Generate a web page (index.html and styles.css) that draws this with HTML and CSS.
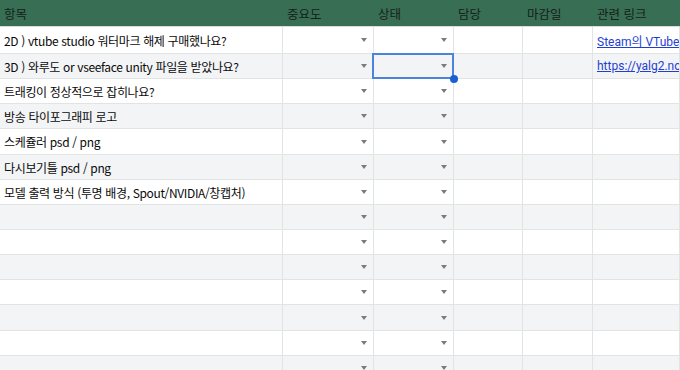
FILE: index.html
```html
<!DOCTYPE html>
<html lang="ko">
<head>
<meta charset="utf-8">
<link rel="stylesheet" href="styles.css">
</head>
<body>
<div class="sheet">
  <div class="row head">
    <div class="c">항목</div><div class="c">중요도</div><div class="c">상태</div><div class="c">담당</div><div class="c">마감일</div><div class="c">관련 링크</div>
  </div>
  <div class="row r27">
    <div class="c t">2D ) vtube studio 워터마크 해제 구매했나요?</div><div class="c dd"><i></i></div><div class="c dd"><i></i></div><div class="c"></div><div class="c"></div><div class="c"><a class="lnk">Steam의 VTube</a></div>
  </div>
  <div class="row alt">
    <div class="c t">3D ) 와루도 or vseeface unity 파일을 받았나요?</div><div class="c dd"><i></i></div><div class="c dd sel"><i></i></div><div class="c"></div><div class="c"></div><div class="c"><a class="lnk">https://yalg2.no</a></div>
  </div>
  <div class="row">
    <div class="c t">트래킹이 정상적으로 잡히나요?</div><div class="c dd"><i></i></div><div class="c dd"><i></i></div><div class="c"></div><div class="c"></div><div class="c"></div>
  </div>
  <div class="row alt">
    <div class="c t">방송 타이포그래피 로고</div><div class="c dd"><i></i></div><div class="c dd"><i></i></div><div class="c"></div><div class="c"></div><div class="c"></div>
  </div>
  <div class="row r26">
    <div class="c t">스케쥴러 psd / png</div><div class="c dd"><i></i></div><div class="c dd"><i></i></div><div class="c"></div><div class="c"></div><div class="c"></div>
  </div>
  <div class="row alt">
    <div class="c t">다시보기틀 psd / png</div><div class="c dd"><i></i></div><div class="c dd"><i></i></div><div class="c"></div><div class="c"></div><div class="c"></div>
  </div>
  <div class="row">
    <div class="c t">모델 출력 방식 (투명 배경, Spout/NVIDIA/창캡처)</div><div class="c dd"><i></i></div><div class="c dd"><i></i></div><div class="c"></div><div class="c"></div><div class="c"></div>
  </div>
  <div class="row alt">
    <div class="c t"></div><div class="c dd"><i></i></div><div class="c dd"><i></i></div><div class="c"></div><div class="c"></div><div class="c"></div>
  </div>
  <div class="row">
    <div class="c t"></div><div class="c dd"><i></i></div><div class="c dd"><i></i></div><div class="c"></div><div class="c"></div><div class="c"></div>
  </div>
  <div class="row alt">
    <div class="c t"></div><div class="c dd"><i></i></div><div class="c dd"><i></i></div><div class="c"></div><div class="c"></div><div class="c"></div>
  </div>
  <div class="row">
    <div class="c t"></div><div class="c dd"><i></i></div><div class="c dd"><i></i></div><div class="c"></div><div class="c"></div><div class="c"></div>
  </div>
  <div class="row alt r26">
    <div class="c t"></div><div class="c dd"><i></i></div><div class="c dd"><i></i></div><div class="c"></div><div class="c"></div><div class="c"></div>
  </div>
  <div class="row">
    <div class="c t"></div><div class="c dd"><i></i></div><div class="c dd"><i></i></div><div class="c"></div><div class="c"></div><div class="c"></div>
  </div>
  <div class="row alt">
    <div class="c t"></div><div class="c dd"><i></i></div><div class="c dd"><i></i></div><div class="c"></div><div class="c"></div><div class="c"></div>
  </div>
</div>
</body>
</html>
```
FILE: styles.css
```css
* { box-sizing: border-box; }
html, body { margin: 0; padding: 0; }
body {
  width: 680px;
  height: 370px;
  overflow: hidden;
  background: #ffffff;
  font-family: "Noto Sans CJK KR", "Noto Sans", sans-serif;
  font-size: 12px;
  color: #0a0a0a;
}
.sheet { width: 680px; }
.row {
  display: grid;
  grid-template-columns: 283px 91px 80px 69px 70px 87px;
  height: 25px;
  background: #ffffff;
}
.row.alt { background: #f3f4f6; }
.row.r27 { height: 27px; }
.row.r26 { height: 26px; }
.c {
  border-right: 1px solid #e2e3e3;
  border-bottom: 1px solid #e2e3e3;
  display: flex;
  align-items: center;
  padding: 0 4px;
  white-space: nowrap;
  overflow: hidden;
  position: relative;
}
.row.head {
  height: 27px;
  background: #386e53;
  color: #15211b;
  font-size: 12.5px;
}
.row.head .c { border: none; border-bottom: 1px solid #d9dcdb; }
.t { letter-spacing: -0.35px; }
.dd { justify-content: flex-end; padding-right: 6px; }
.dd i {
  width: 0; height: 0;
  border-left: 3.5px solid transparent;
  border-right: 3.5px solid transparent;
  border-top: 4px solid #7b7b7b;
}
.sel { overflow: visible; }
.sel::before {
  content: "";
  position: absolute;
  left: -2px; top: -1px; right: -1px; bottom: -1px;
  border: 2px solid #4a84de;
  pointer-events: none;
}
.sel::after {
  content: "";
  position: absolute;
  right: -5px; bottom: -5px;
  width: 8px; height: 8px;
  border-radius: 50%;
  background: #1a5fd0;
  z-index: 2;
}
.lnk {
  font-family: "Roboto", "Liberation Sans", "Noto Sans CJK KR", sans-serif;
  font-size: 12px;
  color: #1f3fd1;
  text-decoration: underline;
}
```
